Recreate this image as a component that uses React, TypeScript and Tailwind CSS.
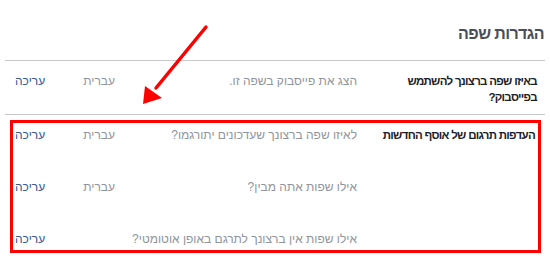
import React from "react";

interface Pref {
  question: string;
  value?: string;
}

const feedPrefs: Pref[] = [
  { question: "לאיזו שפה ברצונך שעדכונים יתורגמו?", value: "עברית" },
  { question: "אילו שפות אתה מבין?", value: "עברית" },
  { question: "אילו שפות אין ברצונך לתרגם באופן אוטומטי?" },
];

const PrefRow: React.FC<{ pref: Pref }> = ({ pref }) => (
  <div className="flex h-4 items-center leading-4">
    <div className="flex-1 text-[#90949c]">{pref.question}</div>
    <div className="w-[60px] text-[#90949c]">{pref.value}</div>
    <a href="#" className="w-[40px] text-left text-[#365899]">
      עריכה
    </a>
  </div>
);

const Arrow: React.FC = () => (
  <svg
    className="pointer-events-none absolute left-0 top-0"
    width="550"
    height="270"
    viewBox="0 0 550 270"
  >
    <line x1="206" y1="27" x2="156" y2="88" stroke="#ff0000" strokeWidth="3.5" strokeLinecap="round" />
    <polygon points="143,104 145,86 162,98" fill="#ff0000" />
  </svg>
);

export default function App() {
  return (
    <div
      dir="rtl"
      className="relative h-[270px] w-[550px] overflow-hidden bg-white text-[12px]"
      style={{ fontFamily: '"Liberation Sans", Arial, sans-serif' }}
    >
      <div className="mx-[5px]">
        <h2 className="border-b border-[#c8c8c8] pb-4 pr-[1px] pt-6 text-[16px] font-bold leading-5 tracking-[-0.6px] text-[#4b4f56]">
          הגדרות שפה
        </h2>

        <div className="flex items-start border-b border-[#c8c8c8] pb-[9px] pl-[10px] pr-[8px] pt-3">
          <div className="w-[180px] text-[11.5px] font-bold leading-4 tracking-[-0.7px] text-[#1d2129]">
            באיזו שפה ברצונך להשתמש
            <br />
            בפייסבוק?
          </div>
          <div className="flex-1">
            <PrefRow pref={{ question: "הצג את פייסבוק בשפה זו.", value: "עברית" }} />
          </div>
        </div>
      </div>

      <div className="ml-[10px] mr-[9px] mt-[5px] flex items-start border-[3px] border-[#ff0000] pb-[3px] pl-[2px] pr-[3px] pt-1">
        <div className="w-[178px] whitespace-nowrap text-[11.5px] font-bold leading-4 tracking-[-0.7px] text-[#1d2129]">
          העדפות תרגום של אוסף החדשות
        </div>
        <div className="flex flex-1 flex-col gap-9">
          {feedPrefs.map((p, i) => (
            <PrefRow key={i} pref={p} />
          ))}
        </div>
      </div>

      <Arrow />
    </div>
  );
}
